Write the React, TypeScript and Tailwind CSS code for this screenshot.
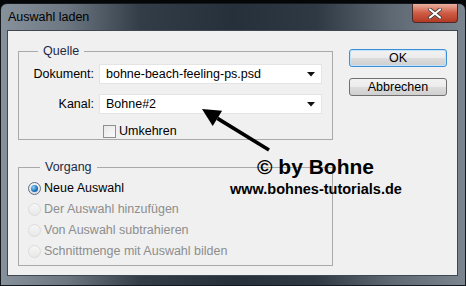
import React from 'react';

const font = { fontFamily: '"Liberation Sans", Arial, sans-serif' };

const Combo = ({ value }: { value: string }) => (
  <div className="ml-[5px] flex h-[20px] w-[223px] items-center justify-between border border-[#e4e4e4] bg-white pl-[6px] pr-[6px]">
    <span className="text-[12.5px] text-black">{value}</span>
    <svg width="8" height="5" viewBox="0 0 8 5">
      <path d="M0 0 L8 0 L4 4.5 Z" fill="#111" />
    </svg>
  </div>
);

const Radio = ({ label, checked }: { label: string; checked?: boolean }) => (
  <div className="flex h-[21px] items-center">
    {checked ? (
      <span className="flex h-[13px] w-[13px] items-center justify-center rounded-full border border-[#5a6f86] bg-[linear-gradient(#f4f4f4,#d9dde2)]">
        <span className="h-[7px] w-[7px] rounded-full bg-[radial-gradient(circle_at_35%_35%,#8fd0f8,#1b6fb8_60%,#0d4a86)]" />
      </span>
    ) : (
      <span className="h-[13px] w-[13px] rounded-full border border-[#dcdcdc] bg-[linear-gradient(#f6f6f6,#e8e8e8)]" />
    )}
    <span className={'ml-[3px] text-[12.5px] ' + (checked ? 'text-black' : 'text-[#8d8d8d]')}>{label}</span>
  </div>
);

export default function App() {
  return (
    <div className="h-[286px] w-[466px] overflow-hidden bg-[#050608]" style={font}>
      <div className="mt-[3px] flex h-[283px] flex-col rounded-t-[7px] border border-[#15191e] bg-[linear-gradient(90deg,#87919b_0%,#6c7782_14%,#323d48_30%,#25303a_50%,#2e3943_68%,#5d6872_84%,#7b858f_100%)]">
        {/* title bar */}
        <div className="flex h-[26px] shrink-0 items-start justify-between">
          <span className="ml-[7px] mt-[6px] text-[12.5px] leading-[14px] text-black">Auswahl laden</span>
          <div className="mr-[7px] flex h-[19px] w-[46px] items-center justify-center rounded-b-[4px] border border-t-0 border-[#4a2a26] bg-[linear-gradient(#eab0a0,#d05c45_50%,#b33a25)]">
            <svg width="14" height="11" viewBox="0 0 14 11">
              <path d="M2 1.5 L12 9.5 M12 1.5 L2 9.5" stroke="#3a3a3a" strokeWidth="3.6" strokeLinecap="round" />
              <path d="M2 1.5 L12 9.5 M12 1.5 L2 9.5" stroke="#ffffff" strokeWidth="2.2" strokeLinecap="round" />
            </svg>
          </div>
        </div>

        {/* client area */}
        <div className="relative mb-[9px] ml-[6px] mr-[7px] flex flex-1 border border-[#3f4750] bg-[#f0f0f0]">
          <div className="ml-[10px] mt-[13px] w-[315px]">
            <fieldset className="border border-[#a9a9a9] pb-[1px]">
              <legend className="ml-[19px] px-[5px] text-[12.5px] leading-[14px] text-[#1c2a45]">Quelle</legend>
              <div className="mt-[6px] flex items-center">
                <span className="w-[75px] text-right text-[12.5px] text-black">Dokument:</span>
                <Combo value="bohne-beach-feeling-ps.psd" />
              </div>
              <div className="mt-[10px] flex items-center">
                <span className="w-[75px] text-right text-[12.5px] text-black">Kanal:</span>
                <Combo value="Bohne#2" />
              </div>
              <div className="ml-[84px] mt-[10px] flex items-center">
                <span className="h-[13px] w-[13px] border border-[#8f8f8f] bg-[linear-gradient(135deg,#e8e8e8,#fafafa)]" />
                <span className="ml-[3px] text-[12.5px] leading-[14px] text-black">Umkehren</span>
              </div>
            </fieldset>

            <fieldset className="mt-[20px] border border-[#a9a9a9] pb-[3px] pl-[9px]">
              <legend className="ml-[12px] px-[5px] text-[12.5px] leading-[14px] text-[#1c2a45]">Vorgang</legend>
              <div className="mt-[4px]">
                <Radio label="Neue Auswahl" checked />
                <Radio label="Der Auswahl hinzufügen" />
                <Radio label="Von Auswahl subtrahieren" />
                <Radio label="Schnittmenge mit Auswahl bilden" />
              </div>
            </fieldset>
          </div>

          <div className="ml-[16px] mt-[18px] flex w-[98px] flex-col">
            <button className="h-[18px] rounded-[3px] border border-[#3c8fd6] bg-[linear-gradient(#f2f2f2,#ebebeb_50%,#dcdcdc_51%,#cfcfcf)] text-[12.5px] leading-none text-black shadow-[inset_0_0_0_1px_#bfe4fb]">
              OK
            </button>
            <button className="mt-[11px] h-[18px] rounded-[3px] border border-[#707070] bg-[linear-gradient(#f2f2f2,#ebebeb_50%,#dddddd_51%,#cfcfcf)] text-[12.5px] leading-none text-black">
              Abbrechen
            </button>
          </div>

          {/* watermark overlay */}
          <svg className="pointer-events-none absolute left-[190px] top-[74px]" width="76" height="50" viewBox="0 0 76 50">
            <path d="M71 45 L19.4 13.4" stroke="#000" strokeWidth="3.6" />
            <path d="M4 4 L24.1 5.7 L14.7 21.1 Z" fill="#000" />
          </svg>
          <span className="pointer-events-none absolute left-[249px] top-[123px] text-[21px] font-bold leading-[26px] text-black">
            © by Bohne
          </span>
          <span className="pointer-events-none absolute left-[222px] top-[149px] text-[14.5px] font-bold leading-[18px] text-black">
            www.bohnes-tutorials.de
          </span>
        </div>
      </div>
    </div>
  );
}
